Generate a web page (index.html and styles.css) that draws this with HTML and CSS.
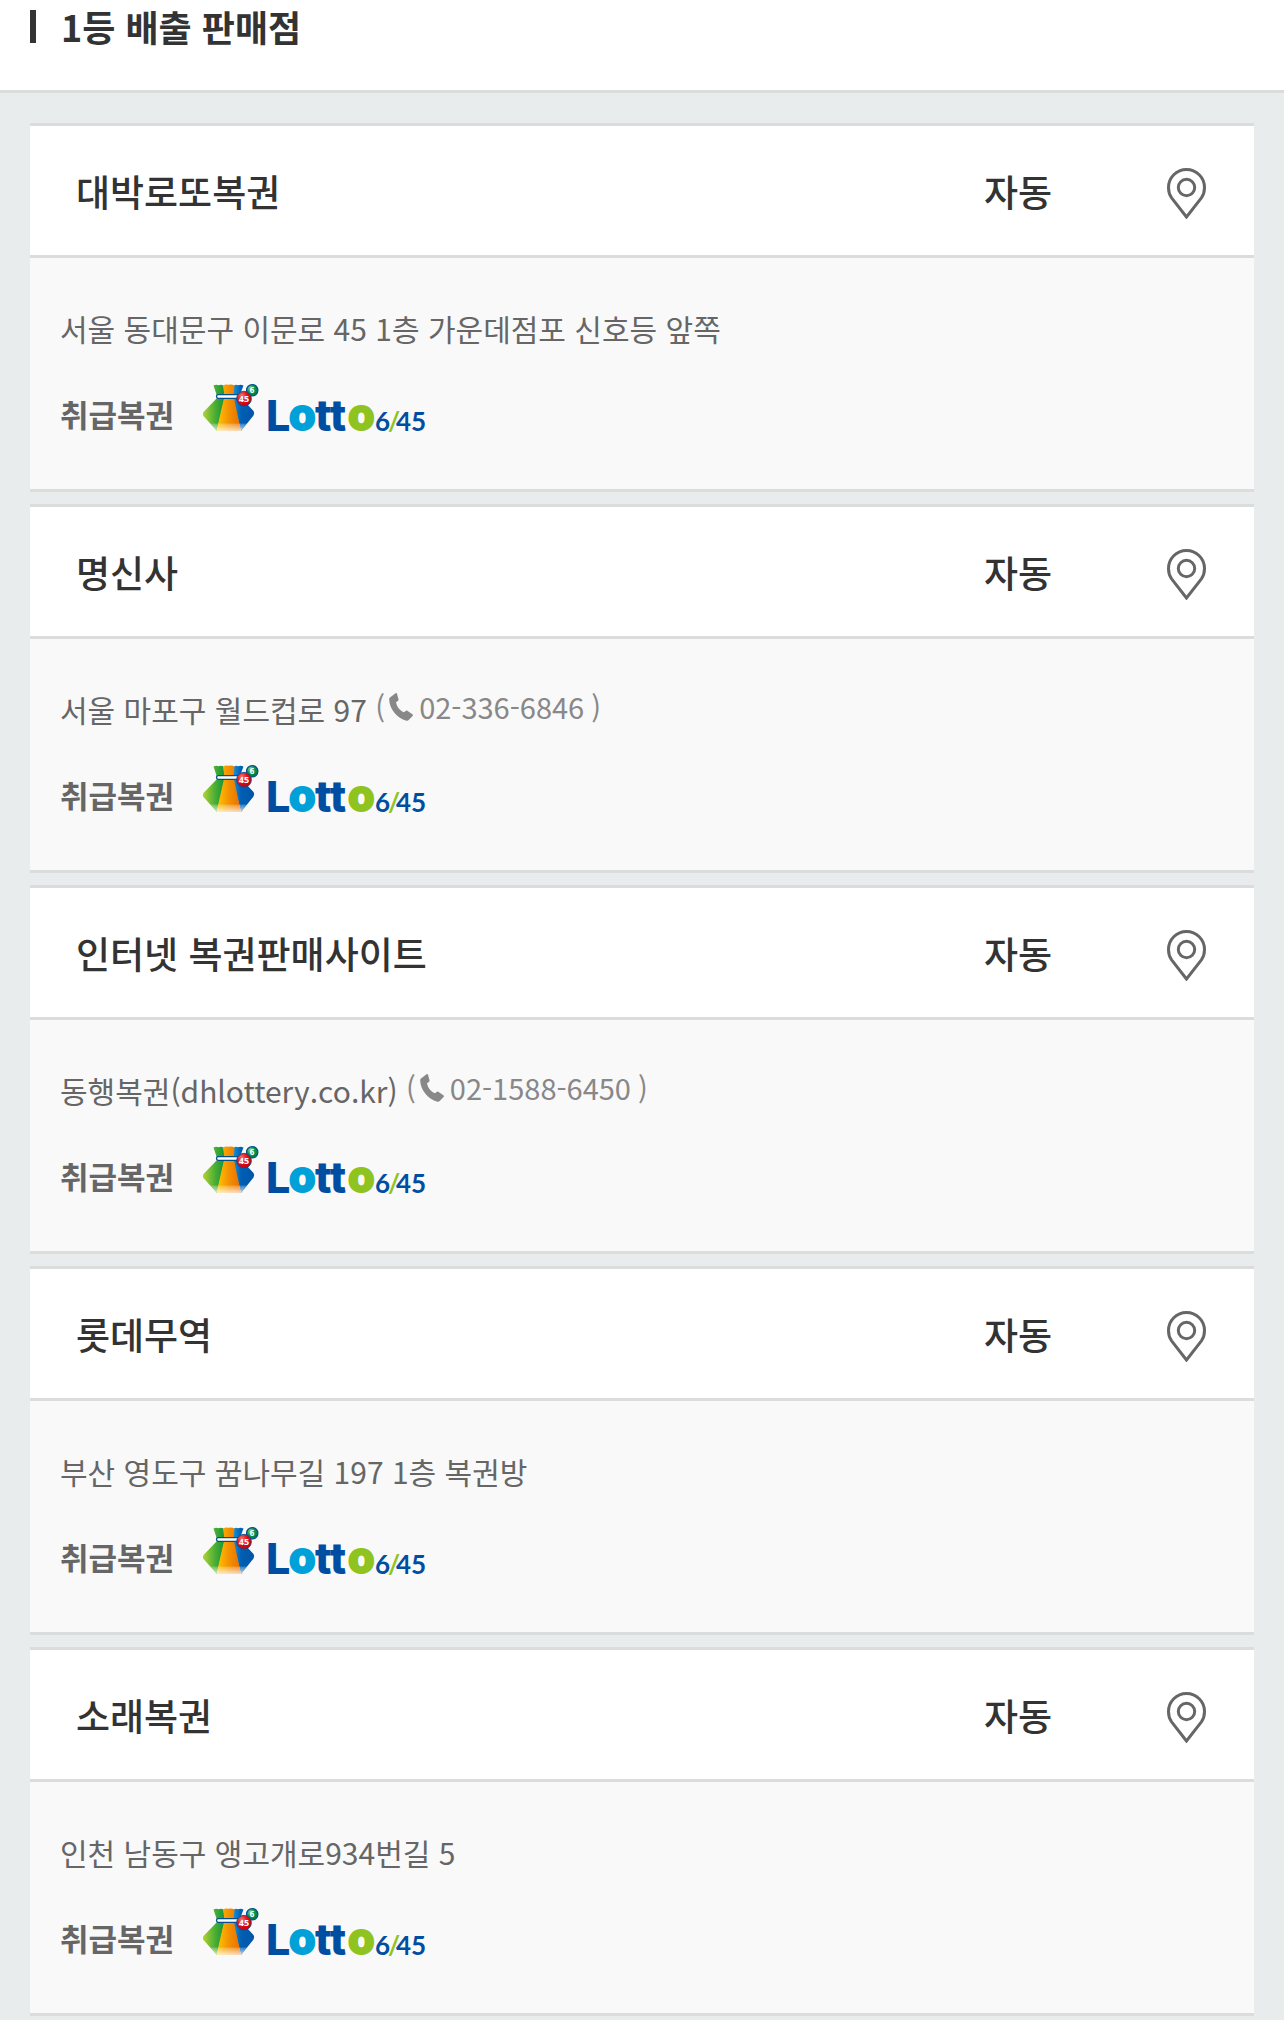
FILE: index.html
```html
<!DOCTYPE html>
<html lang="ko">
<head>
    <meta charset="UTF-8">
    <meta name="viewport" content="width=device-width, initial-scale=1.0">
    <title>1등 배출 판매점</title>
    <link rel="stylesheet" href="styles.css">
</head>
<body>

<!-- shared icons -->
<svg class="defs" width="0" height="0" aria-hidden="true">
    <defs>
        <linearGradient id="bagGreen" x1="0" y1="0" x2="1" y2="0">
            <stop offset="0" stop-color="#b4d234"/>
            <stop offset="0.55" stop-color="#4aae35"/>
            <stop offset="1" stop-color="#149239"/>
        </linearGradient>
        <linearGradient id="bagOrange" x1="0" y1="0" x2="1" y2="0">
            <stop offset="0" stop-color="#ffc800"/>
            <stop offset="0.5" stop-color="#f39200"/>
            <stop offset="1" stop-color="#ea6c00"/>
        </linearGradient>
        <linearGradient id="bagBlue" x1="0" y1="0" x2="1" y2="0">
            <stop offset="0" stop-color="#1a9ae0"/>
            <stop offset="0.4" stop-color="#0060b4"/>
            <stop offset="1" stop-color="#0054a6"/>
        </linearGradient>
        <linearGradient id="bagShine" x1="0" y1="0" x2="0" y2="1">
            <stop offset="0" stop-color="#fff" stop-opacity="0.2"/>
            <stop offset="1" stop-color="#fff" stop-opacity="0.75"/>
        </linearGradient>
        <radialGradient id="ballRed" cx="0.35" cy="0.3" r="0.7">
            <stop offset="0" stop-color="#f47a70"/>
            <stop offset="0.5" stop-color="#e2101c"/>
            <stop offset="1" stop-color="#c8000f"/>
        </radialGradient>
        <radialGradient id="ballGreen" cx="0.35" cy="0.3" r="0.7">
            <stop offset="0" stop-color="#8fd0a0"/>
            <stop offset="0.5" stop-color="#0b9a4a"/>
            <stop offset="1" stop-color="#007a3c"/>
        </radialGradient>
    </defs>
    <symbol id="pin" viewBox="0 0 39 51">
        <path d="M19.5 49 4.6 29.8C2.400 26.800 1.500 23.500 1.500 19.500a18 18 0 0 1 36 0c0 4-.9 7.300-3.100 10.300Z" fill="none" stroke="#666" stroke-width="3"/>
        <circle cx="19.500" cy="19.500" r="8.200" fill="none" stroke="#666" stroke-width="3"/>
    </symbol>
    <symbol id="phone" viewBox="0 0 24 28">
        <path d="M1 4.500 6.500.3c.7-.4 1.300-.2 1.500.5l1.500 5.500c.1.800-.1 1.300-.7 1.700L7 9.200c.8 4.400 3.800 8.300 7.800 10l2-1.300c.6-.4 1.200-.4 1.800 0l4.800 3.400c.6.500.7 1.100.2 1.700L19.700 27c-.6.700-1.400.9-2.300.7C8.200 25.300.4 15.800.2 6.500.1 5.600.3 5 1 4.500Z" fill="#888"/>
    </symbol>
    <symbol id="bag" viewBox="0 0 56 48">
        <path d="M10.500 1.500Q13 .2 15.500 1.200 18 0 20.500 1.500L22 12 14 47 0 31.500Q-.5 29 1 27.500L14.500 13.500Z" fill="url(#bagGreen)"/>
        <path d="M31 1.500Q33 .2 35 1.200 37.500 0 40.500 1.500L36.500 12 50.500 27Q52 29 50.500 31.500L38 47 29 12Z" fill="url(#bagBlue)"/>
        <path d="M20 1.500Q22.500 0 25.500 .8 28.500 0 31.500 1.500L30.500 12 38 47H13.500L21.500 12Z" fill="url(#bagOrange)"/>
        <path d="M7.500 39.500H44L38 47H14Z" fill="url(#bagShine)"/>
        <rect x="13.500" y="10.700" width="25" height="3.600" rx="1.800" fill="#fff" stroke="#00508f" stroke-width="1.300"/>
        <circle cx="49.200" cy="6.300" r="5.700" fill="url(#ballGreen)" stroke="#00508f" stroke-width="1.200"/>
        <circle cx="41" cy="14.700" r="7.400" fill="url(#ballRed)" stroke="#00508f" stroke-width=".8"/>
    </symbol>
</svg>

<header class="title-bar">
    <h1>1등 배출 판매점</h1>
</header>

<ul class="store-list">
    <li class="store">
        <div class="store-head">
            <h2>대박로또복권</h2>
            <span class="type">자동</span>
            <button type="button" class="map" aria-label="지도 보기"><svg><use href="#pin"/></svg></button>
        </div>
        <div class="store-body">
            <p class="address">서울 동대문구 이문로 45 1층 가운데점포 신호등 앞쪽</p>
            <div class="goods">
                <strong>취급복권</strong>
                <svg viewBox="0 0 222 48" role="img" aria-label="Lotto 6/45">
                    <use href="#bag" width="56" height="48"/>
                    <text class="ball small" x="49" y="9">6</text>
                    <text class="ball" x="41" y="18">45</text>
                    <text class="word navy" x="63" y="47">L</text>
                    <text class="word sky" x="86" y="46">o</text>
                    <text class="word navy" x="112" y="47">tt</text>
                    <text class="word lime" x="145" y="46">o</text>
                    <text class="num navy" x="172" y="47">6</text>
                    <text class="num lime" x="185" y="47">/</text>
                    <text class="num navy" x="193" y="47">45</text>
                </svg>
            </div>
        </div>
    </li>
    <li class="store">
        <div class="store-head">
            <h2>명신사</h2>
            <span class="type">자동</span>
            <button type="button" class="map" aria-label="지도 보기"><svg><use href="#pin"/></svg></button>
        </div>
        <div class="store-body">
            <p class="address">서울 마포구 월드컵로 97 <span class="tel">(<a href="tel:02-336-6846"><svg><use href="#phone"/></svg>02-336-6846</a>)</span></p>
            <div class="goods">
                <strong>취급복권</strong>
                <svg viewBox="0 0 222 48" role="img" aria-label="Lotto 6/45">
                    <use href="#bag" width="56" height="48"/>
                    <text class="ball small" x="49" y="9">6</text>
                    <text class="ball" x="41" y="18">45</text>
                    <text class="word navy" x="63" y="47">L</text>
                    <text class="word sky" x="86" y="46">o</text>
                    <text class="word navy" x="112" y="47">tt</text>
                    <text class="word lime" x="145" y="46">o</text>
                    <text class="num navy" x="172" y="47">6</text>
                    <text class="num lime" x="185" y="47">/</text>
                    <text class="num navy" x="193" y="47">45</text>
                </svg>
            </div>
        </div>
    </li>
    <li class="store">
        <div class="store-head">
            <h2>인터넷 복권판매사이트</h2>
            <span class="type">자동</span>
            <button type="button" class="map" aria-label="지도 보기"><svg><use href="#pin"/></svg></button>
        </div>
        <div class="store-body">
            <p class="address">동행복권(dhlottery.co.kr) <span class="tel">(<a href="tel:02-1588-6450"><svg><use href="#phone"/></svg>02-1588-6450</a>)</span></p>
            <div class="goods">
                <strong>취급복권</strong>
                <svg viewBox="0 0 222 48" role="img" aria-label="Lotto 6/45">
                    <use href="#bag" width="56" height="48"/>
                    <text class="ball small" x="49" y="9">6</text>
                    <text class="ball" x="41" y="18">45</text>
                    <text class="word navy" x="63" y="47">L</text>
                    <text class="word sky" x="86" y="46">o</text>
                    <text class="word navy" x="112" y="47">tt</text>
                    <text class="word lime" x="145" y="46">o</text>
                    <text class="num navy" x="172" y="47">6</text>
                    <text class="num lime" x="185" y="47">/</text>
                    <text class="num navy" x="193" y="47">45</text>
                </svg>
            </div>
        </div>
    </li>
    <li class="store">
        <div class="store-head">
            <h2>롯데무역</h2>
            <span class="type">자동</span>
            <button type="button" class="map" aria-label="지도 보기"><svg><use href="#pin"/></svg></button>
        </div>
        <div class="store-body">
            <p class="address">부산 영도구 꿈나무길 197 1층 복권방</p>
            <div class="goods">
                <strong>취급복권</strong>
                <svg viewBox="0 0 222 48" role="img" aria-label="Lotto 6/45">
                    <use href="#bag" width="56" height="48"/>
                    <text class="ball small" x="49" y="9">6</text>
                    <text class="ball" x="41" y="18">45</text>
                    <text class="word navy" x="63" y="47">L</text>
                    <text class="word sky" x="86" y="46">o</text>
                    <text class="word navy" x="112" y="47">tt</text>
                    <text class="word lime" x="145" y="46">o</text>
                    <text class="num navy" x="172" y="47">6</text>
                    <text class="num lime" x="185" y="47">/</text>
                    <text class="num navy" x="193" y="47">45</text>
                </svg>
            </div>
        </div>
    </li>
    <li class="store">
        <div class="store-head">
            <h2>소래복권</h2>
            <span class="type">자동</span>
            <button type="button" class="map" aria-label="지도 보기"><svg><use href="#pin"/></svg></button>
        </div>
        <div class="store-body">
            <p class="address">인천 남동구 앵고개로934번길 5</p>
            <div class="goods">
                <strong>취급복권</strong>
                <svg viewBox="0 0 222 48" role="img" aria-label="Lotto 6/45">
                    <use href="#bag" width="56" height="48"/>
                    <text class="ball small" x="49" y="9">6</text>
                    <text class="ball" x="41" y="18">45</text>
                    <text class="word navy" x="63" y="47">L</text>
                    <text class="word sky" x="86" y="46">o</text>
                    <text class="word navy" x="112" y="47">tt</text>
                    <text class="word lime" x="145" y="46">o</text>
                    <text class="num navy" x="172" y="47">6</text>
                    <text class="num lime" x="185" y="47">/</text>
                    <text class="num navy" x="193" y="47">45</text>
                </svg>
            </div>
        </div>
    </li>
</ul>

</body>
</html>
```

FILE: styles.css
```css
* {
    box-sizing: border-box;
}
body {
    margin: 0;
    background-color: #e8eced;
    color: #333;
    font-family: "Noto Sans CJK KR", "Noto Sans", sans-serif;
}
h1, h2, p, ul {
    margin: 0;
    padding: 0;
}
.defs {
    display: block;
}
.title-bar {
    padding: 0 30px 38px;
    background-color: #fff;
    border-bottom: 3px solid #dbdcdc;
}
.title-bar h1 {
    display: flex;
    align-items: center;
    gap: 25px;
    font-size: 36px;
    font-weight: 700;
    line-height: 52px;
}
.title-bar h1::before {
    content: "";
    width: 6px;
    height: 33px;
    background-color: #333;
}
.store-list {
    display: flex;
    flex-direction: column;
    gap: 12px;
    padding: 30px 30px 4px;
    list-style: none;
}
.store {
    background-color: #f9f9f9;
    border-top: 3px solid #dbdcdc;
    border-bottom: 3px solid #dbdcdc;
}
.store-head {
    display: flex;
    align-items: flex-start;
    padding: 39px 48px 36px 46px;
    background-color: #fff;
    border-bottom: 3px solid #dbdcdc;
    font-size: 37px;
    line-height: 52px;
}
.store-head h2 {
    flex: 1;
    font-size: 37px;
    font-weight: 500;
}
.type {
    width: 183px;
    font-weight: 500;
}
.map {
    height: 54px;
    padding: 3px 0 0;
    border: none;
    background: none;
    cursor: pointer;
}
.map svg {
    display: block;
    width: 39px;
    height: 51px;
}
.store-body {
    padding: 46px 30px 53px;
    color: #666;
    font-size: 31px;
}
.address {
    font-size: 30px;
    line-height: 48px;
}
.tel {
    color: #888;
    font-size: 29px;
    line-height: 30px;
    vertical-align: 3px;
}
.tel a {
    margin: 0 7px 0 4px;
    color: #888;
    text-decoration: none;
}
.tel svg {
    width: 24px;
    height: 28px;
    margin-right: 6px;
    vertical-align: -2px;
}
.goods {
    display: flex;
    align-items: flex-end;
    gap: 29px;
    margin-top: 32px;
    line-height: 44px;
}
.goods strong {
    font-weight: 700;
}
.goods svg {
    width: 222px;
    height: 48px;
    margin-bottom: 4px;
    overflow: visible;
}
.ball {
    fill: #fff;
    font: 700 9px "Open Sans", sans-serif;
    text-anchor: middle;
}
.ball.small {
    font-size: 8px;
}
.word {
    font: 800 43px Inter, sans-serif;
}
.word.sky {
    stroke: #00a1d8;
    stroke-width: 2px;
}
.word.lime {
    stroke: #8fc31f;
    stroke-width: 2px;
}
.num {
    font: 700 26px Lato, sans-serif;
}
.navy {
    fill: #004ea2;
}
.sky {
    fill: #00a1d8;
}
.lime {
    fill: #8fc31f;
}
```
